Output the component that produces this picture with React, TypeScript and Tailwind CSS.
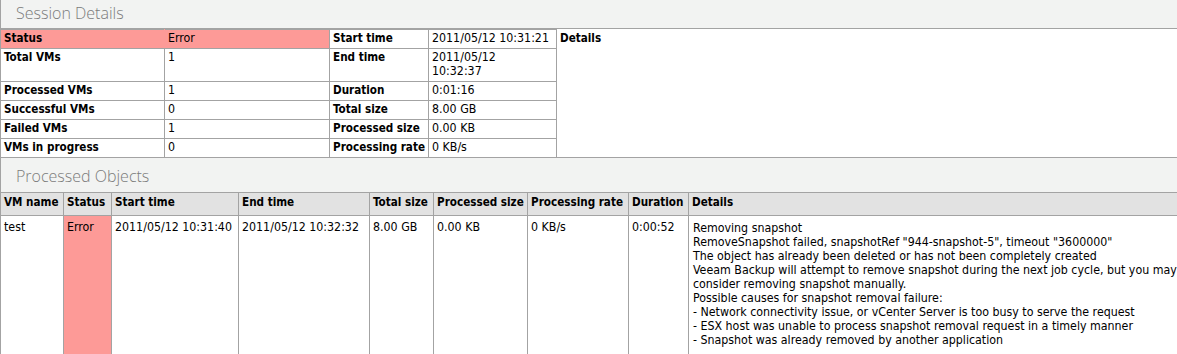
const font = { fontFamily: '"DejaVu Sans Condensed", "DejaVu Sans", Tahoma, sans-serif' }

const summaryRows = [
    { label: 'Status', value: 'Error', label2: 'Start time', value2: '2011/05/12 10:31:21', error: true },
    { label: 'Total VMs', value: '1', label2: 'End time', value2: '2011/05/12\n10:32:37', tall: true },
    { label: 'Processed VMs', value: '1', label2: 'Duration', value2: '0:01:16' },
    { label: 'Successful VMs', value: '0', label2: 'Total size', value2: '8.00 GB' },
    { label: 'Failed VMs', value: '1', label2: 'Processed size', value2: '0.00 KB' },
    { label: 'VMs in progress', value: '0', label2: 'Processing rate', value2: '0 KB/s' },
]

const columns = [
    { name: 'VM name', w: 'w-[63px]' },
    { name: 'Status', w: 'w-[48px]' },
    { name: 'Start time', w: 'w-[127px]' },
    { name: 'End time', w: 'w-[131px]' },
    { name: 'Total size', w: 'w-[64px]' },
    { name: 'Processed size', w: 'w-[94px]' },
    { name: 'Processing rate', w: 'w-[101px]' },
    { name: 'Duration', w: 'w-[60px]' },
    { name: 'Details', w: '' },
]

const details = [
    'Removing snapshot',
    'RemoveSnapshot failed, snapshotRef "944-snapshot-5", timeout "3600000"',
    'The object has already been deleted or has not been completely created',
    'Veeam Backup will attempt to remove snapshot during the next job cycle, but you may',
    'consider removing snapshot manually.',
    'Possible causes for snapshot removal failure:',
    '- Network connectivity issue, or vCenter Server is too busy to serve the request',
    '- ESX host was unable to process snapshot removal request in a timely manner',
    '- Snapshot was already removed by another application',
]

function SectionTitle({ title, className }: { title: string; className: string }) {
    return (
        <div className={`bg-[#f2f3f2] border-l border-[#a3a3a3] pl-[15px] flex items-center text-[16px] font-light text-[#7b7b7b] ${className}`}
            style={{ fontFamily: '"Open Sans", "Liberation Sans", sans-serif' }}>
            {title}
        </div>
    )
}

export default function App() {
    const cell = 'border border-[#a3a3a3] px-[3px] pt-[1px] align-top text-left whitespace-nowrap'

    return (
        <div className="w-[1177px] h-[354px] overflow-hidden bg-white text-[12.3px] leading-[14px] text-black" style={font}>
            {/* Session details */}
            <SectionTitle title="Session Details" className="h-[29px] pb-[3px] border-b border-b-[#a3a3a3]" />
            <table className="w-full table-fixed border-collapse border-l border-[#a3a3a3]">
                <colgroup>
                    <col className="w-[164px]" />
                    <col className="w-[165px]" />
                    <col className="w-[99px]" />
                    <col className="w-[128px]" />
                    <col />
                </colgroup>
                <tbody>
                    {summaryRows.map((r, i) => (
                        <tr key={r.label} className={r.tall ? 'h-[33px]' : 'h-[19px]'}>
                            <td className={`${cell} font-bold text-[11.6px] ${r.error ? 'bg-[#fd9a97] border-r-[#fd9a97]' : ''}`}>{r.label}</td>
                            <td className={`${cell} ${r.error ? 'bg-[#fd9a97]' : ''}`}>{r.value}</td>
                            <td className={`${cell} font-bold text-[11.6px]`}>{r.label2}</td>
                            <td className={`${cell} whitespace-pre-line`}>{r.value2}</td>
                            {i === 0 && (
                                <td rowSpan={6} className="border-b border-[#a3a3a3] px-[3px] pt-[1px] align-top font-bold text-[11.6px]">
                                    Details
                                </td>
                            )}
                        </tr>
                    ))}
                </tbody>
            </table>

            {/* Processed objects */}
            <SectionTitle title="Processed Objects" className="h-[35px] pt-[1px] border-b border-b-[#a3a3a3]" />
            <table className="w-full table-fixed border-collapse border-l border-[#a3a3a3]">
                <colgroup>
                    {columns.map(c => <col key={c.name} className={c.w} />)}
                </colgroup>
                <thead>
                    <tr className="h-[22px] bg-[#e2e2e2]">
                        {columns.map(c => (
                            <th key={c.name} className="border border-[#a3a3a3] border-t-0 px-[3px] pt-[2px] align-top text-left font-bold text-[11.6px] whitespace-nowrap last:border-r-0">
                                {c.name}
                            </th>
                        ))}
                    </tr>
                </thead>
                <tbody>
                    <tr className="h-[160px]">
                        <td className={`${cell} pt-[4px]`}>test</td>
                        <td className={`${cell} pt-[4px] bg-[#fd9a97]`}>Error</td>
                        <td className={`${cell} pt-[4px]`}>2011/05/12 10:31:40</td>
                        <td className={`${cell} pt-[4px]`}>2011/05/12 10:32:32</td>
                        <td className={`${cell} pt-[4px]`}>8.00 GB</td>
                        <td className={`${cell} pt-[4px]`}>0.00 KB</td>
                        <td className={`${cell} pt-[4px]`}>0 KB/s</td>
                        <td className={`${cell} pt-[4px]`}>0:00:52</td>
                        <td className="border-l border-[#a3a3a3] px-[4px] pt-[5px] align-top whitespace-nowrap">
                            {details.map(d => <div key={d}>{d}</div>)}
                        </td>
                    </tr>
                </tbody>
            </table>
        </div>
    )
}
